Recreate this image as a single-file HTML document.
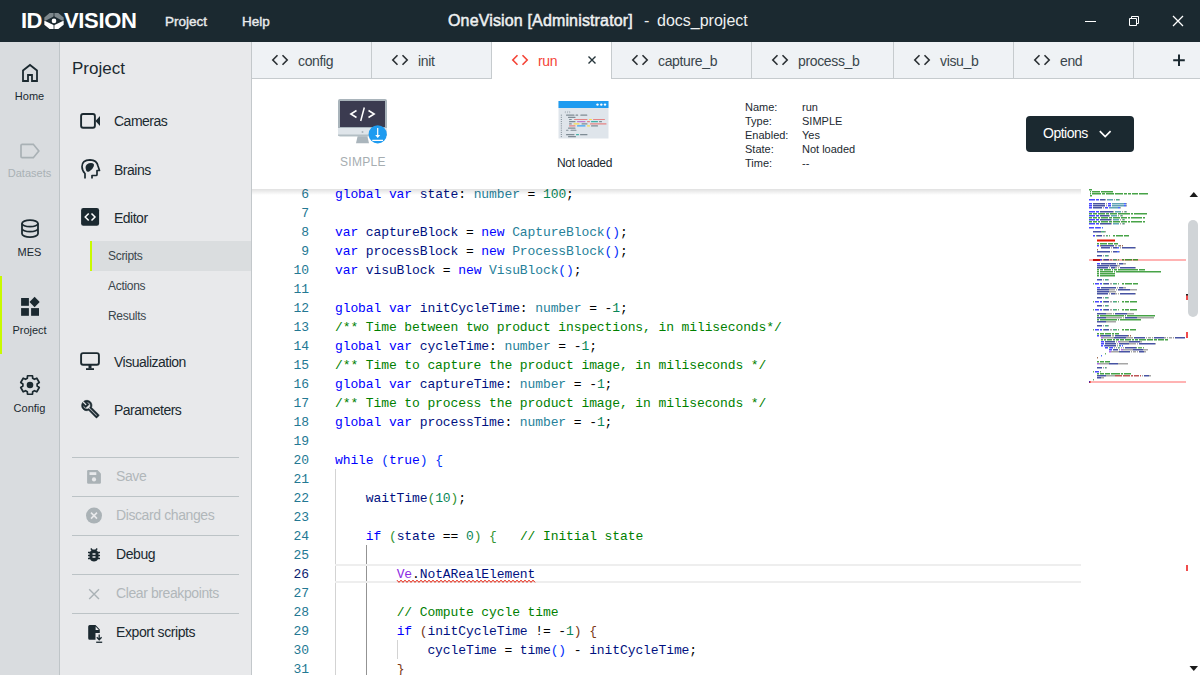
<!DOCTYPE html>
<html><head><meta charset="utf-8">
<style>
*{box-sizing:border-box;margin:0;padding:0}
html,body{width:1200px;height:675px;overflow:hidden;background:#fff;font-family:"Liberation Sans",sans-serif}
.abs{position:absolute}
#title{position:absolute;left:0;top:0;width:1200px;height:42px;background:#1b2930}
.t{position:absolute;white-space:nowrap;line-height:1}
#rail{position:absolute;left:0;top:42px;width:60px;height:633px;background:#d9dcdf;border-right:1px solid #bfc5c8}
#panel{position:absolute;left:60px;top:42px;width:192px;height:633px;background:#e8e9eb;border-right:1px solid #c3c8cb}
.rl{position:absolute;width:59px;text-align:center;font-size:11px;line-height:1;color:#1b2930}
.pi{position:absolute;left:54px;font-size:14px;line-height:1;color:#1b2930;white-space:nowrap;letter-spacing:-0.5px}
.sub{position:absolute;left:48px;font-size:12px;line-height:1;color:#3a464c;letter-spacing:-0.3px}
.sep{position:absolute;left:12px;width:167px;height:1px;background:#bcc3c6}
.btn{position:absolute;left:56px;font-size:14px;line-height:1;color:#1b2930;white-space:nowrap;letter-spacing:-0.4px}
.dis{color:#b1b7ba}
#tabs{position:absolute;left:252px;top:42px;width:948px;height:37px;background:#eff2f5;border-bottom:1px solid #c6cbce}
.tab{position:absolute;top:0;height:37px;border-right:1px solid #c6cbce}
.tab .tx{position:absolute;top:12px;font-size:14px;line-height:1;color:#3a464c;white-space:nowrap}
#hdr{position:absolute;left:252px;top:79px;width:948px;height:111px;background:#fff}
#ed{position:absolute;left:252px;top:188px;width:948px;height:487px;background:#fff;overflow:hidden}
.ln{position:absolute;left:0;width:57px;text-align:right;font-family:"Liberation Mono",monospace;font-size:13px;line-height:19px;color:#237893;padding-top:1px;letter-spacing:-0.1px}
.ln.act{color:#0b216f}
.cl{position:absolute;left:83px;white-space:pre;font-family:"Liberation Mono",monospace;font-size:13px;line-height:19px;color:#000;padding-top:1px;letter-spacing:-0.1px}
</style></head><body>
<!-- TITLE BAR -->
<div id="title">
  <div class="t" style="left:21px;top:10px;font-size:22px;font-weight:bold;color:#fff;letter-spacing:-0.6px">ID</div>
  <svg class="abs" style="left:43.9px;top:13.1px" width="20" height="16" viewBox="0 0 19.1 15.8">
    <polygon points="0,7.7 0,4.4 5.2,0 13.8,0 19.1,4.4 19.1,7.7" fill="#7d878c"/>
    <polygon points="0,7.9 19.1,7.9 19.1,11.6 13.8,15.8 5.2,15.8 0,11.6" fill="#fff"/>
    <polygon points="9.55,3.3 18.3,7.8 9.55,12.2 0.8,7.8" fill="#1b2930"/>
    <rect x="9.15" y="0" width="0.8" height="15.8" fill="#1b2930"/>
    <circle cx="9.55" cy="7.8" r="2.3" fill="#fff"/>
  </svg>
  <div class="t" style="left:64px;top:10px;font-size:22px;font-weight:bold;color:#fff;letter-spacing:-0.35px">VISION</div>
  <div class="t" style="left:165px;top:15px;font-size:13.5px;color:#e9ebec;-webkit-text-stroke:0.4px #e9ebec">Project</div>
  <div class="t" style="left:242px;top:15px;font-size:13.5px;color:#e9ebec;-webkit-text-stroke:0.4px #e9ebec">Help</div>
  <div class="t" style="left:448px;top:13px;font-size:16px;color:#eef0f1;-webkit-text-stroke:0.5px #eef0f1;letter-spacing:0.15px">OneVision [Administrator]</div>
  <div class="t" style="left:644px;top:13px;font-size:16px;color:#eef0f1">-</div>
  <div class="t" style="left:657px;top:13px;font-size:16px;color:#eef0f1">docs_project</div>
  <div class="abs" style="left:1085px;top:21px;width:11px;height:1px;background:#fff"></div>
  <svg class="abs" style="left:1128px;top:15px" width="12" height="12" viewBox="0 0 12 12"><path d="M1.5 3.5h7v7h-7z M3.5 3.5v-2h7v7h-2" fill="none" stroke="#fff" stroke-width="1"/></svg>
  <svg class="abs" style="left:1172px;top:15px" width="12" height="12" viewBox="0 0 12 12"><path d="M1 1L11 11M11 1L1 11" stroke="#fff" stroke-width="1.3"/></svg>
</div>

<!-- LEFT RAIL -->
<div id="rail"></div>
<div style="position:absolute;left:0;top:276px;width:2px;height:78px;background:#c8fa00"></div>
<div class="rl" style="top:91px">Home</div>
<div class="rl" style="top:168px;color:#a9b1b5">Datasets</div>
<div class="rl" style="top:247px">MES</div>
<div class="rl" style="top:325px">Project</div>
<div class="rl" style="top:403px">Config</div>
<svg class="abs" style="left:0;top:0" width="60" height="420">
 <path d="M23 81V70.5L30 65L37 70.5V81H32V75H28V81Z" fill="none" stroke="#1b2930" stroke-width="1.8" stroke-linejoin="miter"/>
 <path d="M22.2 144.3H33.3L38.8 151L33.3 157.7H22.2Q21 157.7 21 156.5V145.5Q21 144.3 22.2 144.3Z" fill="none" stroke="#a9b1b5" stroke-width="1.7"/>
 <ellipse cx="30" cy="223.4" rx="8" ry="3.3" fill="none" stroke="#1b2930" stroke-width="1.8"/>
 <path d="M22 223.4V233.8A8 3.3 0 0 0 38 233.8V223.4M22 228.4A8 3.3 0 0 0 38 228.4" fill="none" stroke="#1b2930" stroke-width="1.8"/>
 <rect x="21.1" y="298" width="7.8" height="7.8" fill="#1b2930"/>
 <rect x="21.1" y="308.1" width="7.8" height="7.7" fill="#1b2930"/>
 <rect x="31.1" y="308.1" width="7.9" height="7.7" fill="#1b2930"/>
 <path d="M34.6 296.8L39.7 302L34.6 307.2L29.5 302Z" fill="#1b2930"/>
 <path d="M27.30 378.32 L27.52 375.73 L32.48 375.73 L32.70 378.32 L34.43 379.33 L36.79 378.21 L39.27 382.52 L37.13 384.00 L37.13 386.00 L39.27 387.48 L36.79 391.79 L34.43 390.67 L32.70 391.68 L32.48 394.27 L27.52 394.27 L27.30 391.68 L25.57 390.67 L23.21 391.79 L20.73 387.48 L22.87 386.00 L22.87 384.00 L20.73 382.52 L23.21 378.21 L25.57 379.33 Z" fill="none" stroke="#1b2930" stroke-width="1.7" stroke-linejoin="round"/>
 <circle cx="30" cy="385" r="3.3" fill="#1b2930"/>
</svg>

<!-- SIDE PANEL -->
<div id="panel"></div>
<div class="t" style="left:72px;top:60px;font-size:17px;color:#1b2930">Project</div>
<div class="pi" style="left:114px;top:114px">Cameras</div>
<div class="pi" style="left:114px;top:163px">Brains</div>
<div class="pi" style="left:114px;top:211px">Editor</div>
<div class="abs" style="left:90px;top:241px;width:161px;height:30px;background:#dadddf"></div>
<div class="abs" style="left:90px;top:241px;width:2px;height:30px;background:#c8fa00"></div>
<div class="sub" style="left:108px;top:250px">Scripts</div>
<div class="sub" style="left:108px;top:280px">Actions</div>
<div class="sub" style="left:108px;top:310px">Results</div>
<div class="pi" style="left:114px;top:355px">Visualization</div>
<div class="pi" style="left:114px;top:403px">Parameters</div>
<div class="sep" style="left:72px;top:457px"></div>
<div class="sep" style="left:72px;top:496px"></div>
<div class="sep" style="left:72px;top:535px"></div>
<div class="sep" style="left:72px;top:574px"></div>
<div class="sep" style="left:72px;top:613px"></div>
<div class="btn dis" style="left:116px;top:469px">Save</div>
<div class="btn dis" style="left:116px;top:508px">Discard changes</div>
<div class="btn" style="left:116px;top:547px">Debug</div>
<div class="btn dis" style="left:116px;top:586px">Clear breakpoints</div>
<div class="btn" style="left:116px;top:625px">Export scripts</div>
<svg class="abs" style="left:0;top:0" width="252" height="675">
 <rect x="81.1" y="114" width="13.8" height="13.8" rx="2" fill="none" stroke="#1b2930" stroke-width="1.9"/>
 <path d="M95.5 121L100 116V126Z" fill="#1b2930"/>
 <path d="M85 178.5V173.5Q82 170.5 82 166.5Q82 160 90 159.8Q97 160 98 166L99.5 170.5H97V174.5Q97 175.5 96 175.5H92V178.5" fill="none" stroke="#1b2930" stroke-width="1.7" stroke-linejoin="round"/>
 <path d="M86.3 170.8Q84.6 166.5 86.8 164.5Q89.3 162.6 92.6 163.2Q94.6 163.8 93.7 166.4Q92.6 169.6 89.2 171.4Q87.1 172.4 86.3 170.8Z" fill="#1b2930"/>
 <rect x="81.1" y="208" width="18" height="17.8" rx="2.2" fill="#1b2930"/>
 <path d="M88.7 213.5L85.2 217L88.7 220.5M91.5 213.5L95 217L91.5 220.5" fill="none" stroke="#fff" stroke-width="1.5"/>
 <rect x="81.1" y="353.1" width="17.8" height="11.6" rx="2" fill="none" stroke="#1b2930" stroke-width="1.9"/>
 <rect x="88.5" y="365" width="3" height="3.5" fill="#1b2930"/>
 <rect x="86" y="368.2" width="8" height="1.8" fill="#1b2930"/>
 <path transform="translate(80.8 399.5) scale(0.8)" d="M22.61 18.99l-9.08-9.08c.93-2.34.45-5.1-1.44-7C9.79.61 6.21.4 3.66 2.26L7.5 6.11 6.08 7.52 2.25 3.69C.39 6.23.6 9.82 2.9 12.11c1.86 1.86 4.57 2.35 6.89 1.48l9.11 9.11c.39.39 1.02.39 1.41 0l2.3-2.3c.4-.38.4-1.01 0-1.41zm-3 1.6l-9.46-9.46c-.61.45-1.29.72-2 .82-1.36.2-2.79-.21-3.83-1.25C3.37 9.76 2.93 8.5 3 7.26l3.09 3.09 4.24-4.24-3.09-3.09c1.24-.07 2.49.37 3.44 1.31 1.08 1.08 1.49 2.57 1.24 3.96-.12.71-.42 1.37-.88 1.96l9.45 9.45-.88.89z" fill="#1b2930" stroke="#1b2930" stroke-width="0.7"/>
 <path d="M87.1 471.2Q87.1 470 88.3 470H97.5L100.9 473.4V482.6Q100.9 483.8 99.7 483.8H88.3Q87.1 483.8 87.1 482.6Z" fill="#aab2b6"/>
 <rect x="89.5" y="472.2" width="6.8" height="2.8" fill="#e8e9eb"/>
 <circle cx="94" cy="479.4" r="2.1" fill="#e8e9eb"/>
 <circle cx="94" cy="515.6" r="8" fill="#aab2b6"/>
 <path d="M91 512.6L97 518.6M97 512.6L91 518.6" stroke="#e8e9eb" stroke-width="1.6"/>
 <path transform="translate(85 545.75) scale(0.75)" d="M20 8h-2.81c-.45-.78-1.07-1.45-1.82-1.96L17 4.41 15.59 3l-2.17 2.17C12.96 5.06 12.49 5 12 5c-.49 0-.96.06-1.41.17L8.41 3 7 4.41l1.62 1.63C7.88 6.55 7.26 7.22 6.81 8H4v2h2.09c-.05.33-.09.66-.09 1v1H4v2h2v1c0 .34.04.67.09 1H4v2h2.81c1.04 1.79 2.97 3 5.19 3s4.15-1.21 5.19-3H20v-2h-2.09c.05-.33.09-.66.09-1v-1h2v-2h-2v-1c0-.34-.04-.67-.09-1H20V8zm-6 8h-4v-2h4v2zm0-4h-4v-2h4v2z" fill="#1b2930"/>
 <path d="M89.2 589.2L99 599M99 589.2L89.2 599" stroke="#aab2b6" stroke-width="1.4"/>
 <path d="M89.7 625.1H95.5L99.8 629.4V633H95.5V639.8H89.7Q88.2 639.8 88.2 638.3V626.6Q88.2 625.1 89.7 625.1Z" fill="#1b2930"/>
 <path d="M95.6 626.6L98.9 629.9H95.6Z" fill="#e8e9eb"/>
 <path d="M99.2 634.5V639.5M96.8 637.2L99.2 639.8L101.6 637.2" fill="none" stroke="#1b2930" stroke-width="1.3"/>
 <rect x="96.2" y="641.6" width="6" height="1.3" fill="#1b2930"/>
</svg>

<!-- TABS -->
<div id="tabs"></div>
<div class="abs" style="left:371px;top:42px;width:1px;height:36px;background:#c6cbce"></div>
<div class="t" style="left:298px;top:54px;font-size:14px;color:#3a464c;letter-spacing:-0.35px">config</div>
<div class="abs" style="left:491px;top:42px;width:1px;height:36px;background:#c6cbce"></div>
<div class="t" style="left:418px;top:54px;font-size:14px;color:#3a464c;letter-spacing:-0.35px">init</div>
<div class="abs" style="left:492px;top:42px;width:119px;height:37px;background:#fff"></div>
<div class="abs" style="left:611px;top:42px;width:1px;height:36px;background:#c6cbce"></div>
<div class="t" style="left:538px;top:54px;font-size:14px;color:#f44336;letter-spacing:-0.35px">run</div>
<div class="abs" style="left:751px;top:42px;width:1px;height:36px;background:#c6cbce"></div>
<div class="t" style="left:658px;top:54px;font-size:14px;color:#3a464c;letter-spacing:-0.35px">capture_b</div>
<div class="abs" style="left:893px;top:42px;width:1px;height:36px;background:#c6cbce"></div>
<div class="t" style="left:798px;top:54px;font-size:14px;color:#3a464c;letter-spacing:-0.35px">process_b</div>
<div class="abs" style="left:1013px;top:42px;width:1px;height:36px;background:#c6cbce"></div>
<div class="t" style="left:940px;top:54px;font-size:14px;color:#3a464c;letter-spacing:-0.35px">visu_b</div>
<div class="abs" style="left:1133px;top:42px;width:1px;height:36px;background:#c6cbce"></div>
<div class="t" style="left:1060px;top:54px;font-size:14px;color:#3a464c;letter-spacing:-0.35px">end</div>
<svg class="abs" style="left:0;top:0" width="1200" height="80">
<path d="M277.5 55.3L272.8 60L277.5 64.7M282.5 55.3L287.2 60L282.5 64.7" fill="none" stroke="#2a2f33" stroke-width="1.6"/>
<path d="M397.5 55.3L392.8 60L397.5 64.7M402.5 55.3L407.2 60L402.5 64.7" fill="none" stroke="#2a2f33" stroke-width="1.6"/>
<path d="M517.5 55.3L512.8 60L517.5 64.7M522.5 55.3L527.2 60L522.5 64.7" fill="none" stroke="#f44336" stroke-width="1.6"/>
<path d="M637.5 55.3L632.8 60L637.5 64.7M642.5 55.3L647.2 60L642.5 64.7" fill="none" stroke="#2a2f33" stroke-width="1.6"/>
<path d="M777.5 55.3L772.8 60L777.5 64.7M782.5 55.3L787.2 60L782.5 64.7" fill="none" stroke="#2a2f33" stroke-width="1.6"/>
<path d="M919.5 55.3L914.8 60L919.5 64.7M924.5 55.3L929.2 60L924.5 64.7" fill="none" stroke="#2a2f33" stroke-width="1.6"/>
<path d="M1039.5 55.3L1034.8 60L1039.5 64.7M1044.5 55.3L1049.2 60L1044.5 64.7" fill="none" stroke="#2a2f33" stroke-width="1.6"/>
<path d="M588.5 56.5L595.5 63.5M595.5 56.5L588.5 63.5" stroke="#26353b" stroke-width="1.4"/>
<path d="M1179 54.5V66M1173.2 60.2H1184.8" stroke="#1b2930" stroke-width="2"/>
</svg>

<!-- HEADER -->
<div id="hdr"></div>
<div class="abs" style="left:252px;top:185px;width:836px;height:8px;background:linear-gradient(#fff0,#0000)"></div>
<svg class="abs" style="left:0;top:0" width="1200" height="190">
 <rect x="338" y="99" width="49" height="37.3" rx="2" fill="#a9b4bb"/>
 <rect x="340" y="101" width="45" height="26" fill="#3b3b50"/>
 <rect x="338" y="128" width="49" height="8.3" rx="1.5" fill="#b3bec4"/>
 <rect x="338" y="128" width="49" height="6.5" fill="#dfe5ea"/>
 <circle cx="362.5" cy="132" r="1" fill="#a9b4bb"/>
 <path d="M357.6 136.3H367.4L369 143.2H356Z" fill="#aab5bc"/>
 <path d="M356.5 110.5L350.8 114L356.5 117.5M368.5 110.5L374.2 114L368.5 117.5M364.3 107.5L360.7 121" fill="none" stroke="#fff" stroke-width="1.5"/>
 <circle cx="377.7" cy="134.3" r="9.1" fill="#1e9bf0"/>
 <path d="M377.7 128V135.5M372.3 140.3H383" fill="none" stroke="#fff" stroke-width="1.2"/>
 <path d="M375.2 135H380.2L377.7 137.9Z" fill="#fff"/>
 <rect x="558.5" y="101" width="50" height="37.5" fill="#dfe5eb"/>
 <rect x="558.5" y="101" width="50" height="7" fill="#1e9bf0"/>
 <circle cx="597.5" cy="104.6" r="1.2" fill="#fff"/><circle cx="601.3" cy="104.6" r="1.2" fill="#fff"/><circle cx="605" cy="104.6" r="1.2" fill="#fff"/>
 <g>
 <path d="M566 111.3l-1.2 0.9 1.2 0.9M569 111.3l1.2 0.9-1.2 0.9M567.9 110.9l-0.6 2.4" fill="none" stroke="#8f9aa2" stroke-width="0.5"/>
  <rect x="560.8" y="114.70" width="1.2" height="0.9" fill="#6f7c86" fill-opacity="0.8"/>
  <rect x="566" y="114.60" width="8.5" height="1.2" rx="0.5" fill="#6f7c86" fill-opacity="0.85"/>
  <rect x="575.5" y="114.60" width="2.7" height="1.2" rx="0.5" fill="#6f7c86" fill-opacity="0.85"/>
  <rect x="580.3" y="114.60" width="7" height="1.2" rx="0.5" fill="#6f7c86" fill-opacity="0.85"/>
  <rect x="560.8" y="116.85" width="1.2" height="0.9" fill="#6f7c86" fill-opacity="0.8"/>
  <rect x="568" y="116.75" width="7.5" height="1.2" rx="0.5" fill="#6f7c86" fill-opacity="0.85"/>
  <rect x="560.8" y="119.00" width="1.2" height="0.9" fill="#6f7c86" fill-opacity="0.8"/>
  <rect x="569" y="118.90" width="2.8" height="1.2" rx="0.5" fill="#6f7c86" fill-opacity="0.85"/>
  <rect x="574" y="118.90" width="13.5" height="1.2" rx="0.5" fill="#e57373" fill-opacity="0.85"/>
  <rect x="589" y="118.90" width="3" height="1.2" rx="0.5" fill="#fdd835" fill-opacity="0.85"/>
  <rect x="593" y="118.90" width="12" height="1.2" rx="0.5" fill="#e57373" fill-opacity="0.85"/>
  <rect x="560.8" y="121.15" width="1.2" height="0.9" fill="#6f7c86" fill-opacity="0.8"/>
  <rect x="569" y="121.05" width="6.5" height="1.2" rx="0.5" fill="#6f7c86" fill-opacity="0.85"/>
  <rect x="577" y="121.05" width="8.5" height="1.2" rx="0.5" fill="#ba68c8" fill-opacity="0.85"/>
  <rect x="587" y="121.05" width="3" height="1.2" rx="0.5" fill="#e57373" fill-opacity="0.85"/>
  <rect x="591" y="121.05" width="7" height="1.2" rx="0.5" fill="#26a69a" fill-opacity="0.85"/>
  <rect x="599" y="121.05" width="3" height="1.2" rx="0.5" fill="#6f7c86" fill-opacity="0.85"/>
  <rect x="560.8" y="123.30" width="1.2" height="0.9" fill="#6f7c86" fill-opacity="0.8"/>
  <rect x="569" y="123.20" width="2.8" height="1.2" rx="0.5" fill="#6f7c86" fill-opacity="0.85"/>
  <rect x="573.5" y="123.20" width="6" height="1.2" rx="0.5" fill="#fdd835" fill-opacity="0.85"/>
  <rect x="581.5" y="123.20" width="6" height="1.2" rx="0.5" fill="#6f7c86" fill-opacity="0.85"/>
  <rect x="590" y="123.20" width="16.5" height="1.2" rx="0.5" fill="#e57373" fill-opacity="0.85"/>
  <rect x="560.8" y="125.45" width="1.2" height="0.9" fill="#6f7c86" fill-opacity="0.8"/>
  <rect x="569" y="125.35" width="6.5" height="1.2" rx="0.5" fill="#e57373" fill-opacity="0.85"/>
  <rect x="577" y="125.35" width="8.5" height="1.2" rx="0.5" fill="#2196f3" fill-opacity="0.85"/>
  <rect x="587" y="125.35" width="3" height="1.2" rx="0.5" fill="#fdd835" fill-opacity="0.85"/>
  <rect x="591" y="125.35" width="7" height="1.2" rx="0.5" fill="#6f7c86" fill-opacity="0.85"/>
  <rect x="560.8" y="127.60" width="1.2" height="0.9" fill="#6f7c86" fill-opacity="0.8"/>
  <rect x="568" y="127.50" width="7.5" height="1.2" rx="0.5" fill="#6f7c86" fill-opacity="0.85"/>
  <rect x="560.8" y="129.75" width="1.2" height="0.9" fill="#6f7c86" fill-opacity="0.8"/>
  <rect x="566" y="129.65" width="2.5" height="1.2" rx="0.5" fill="#6f7c86" fill-opacity="0.85"/>
  <rect x="570.5" y="129.65" width="6" height="1.2" rx="0.5" fill="#6f7c86" fill-opacity="0.85"/>
  <rect x="560.8" y="131.90" width="1.2" height="0.9" fill="#6f7c86" fill-opacity="0.8"/>
  <rect x="560.8" y="134.05" width="1.2" height="0.9" fill="#6f7c86" fill-opacity="0.8"/>
  <rect x="566" y="133.95" width="8.5" height="1.2" rx="0.5" fill="#6f7c86" fill-opacity="0.85"/>
  <rect x="576" y="133.95" width="3" height="1.2" rx="0.5" fill="#26a69a" fill-opacity="0.85"/>
  <rect x="580" y="133.95" width="7.5" height="1.2" rx="0.5" fill="#6f7c86" fill-opacity="0.85"/>
  <rect x="560.8" y="136.20" width="1.2" height="0.9" fill="#6f7c86" fill-opacity="0.8"/>
  <rect x="568" y="136.10" width="8" height="1.2" rx="0.5" fill="#6f7c86" fill-opacity="0.85"/>
 </g>
 <rect x="1026" y="116" width="108" height="36" rx="4" fill="#1b2930"/>
 <path d="M1099.8 131.2L1105.2 136.6L1110.6 131.2" fill="none" stroke="#fff" stroke-width="1.7"/>
</svg>
<div class="t" style="left:340px;top:156px;font-size:12px;color:#a6adb1;letter-spacing:0.3px">SIMPLE</div>
<div class="t" style="left:557px;top:157px;font-size:12px;color:#1b2930;letter-spacing:-0.3px">Not loaded</div>
<div class="abs" style="left:745px;top:100px;font-size:11px;line-height:14px;color:#1b2930">Name:<br>Type:<br>Enabled:<br>State:<br>Time:</div>
<div class="abs" style="left:802px;top:100px;font-size:11px;line-height:14px;color:#1b2930">run<br>SIMPLE<br>Yes<br>Not loaded<br>--</div>
<div class="t" style="left:1043px;top:126px;font-size:14px;color:#fff;letter-spacing:-0.5px">Options</div>

<!-- EDITOR -->
<div id="ed">
<div class="ln" style="top:-4px">6</div>
<div class="cl" style="top:-4px"><span style="color:#0000ff">global</span> <span style="color:#0000ff">var</span> <span style="color:#001080">state</span>: <span style="color:#267f99">number</span> = <span style="color:#098658">100</span>;</div>
<div class="ln" style="top:15px">7</div>
<div class="ln" style="top:34px">8</div>
<div class="cl" style="top:34px"><span style="color:#0000ff">var</span> <span style="color:#001080">captureBlock</span> = <span style="color:#0000ff">new</span> <span style="color:#267f99">CaptureBlock</span><span style="color:#0431fa">()</span>;</div>
<div class="ln" style="top:53px">9</div>
<div class="cl" style="top:53px"><span style="color:#0000ff">var</span> <span style="color:#001080">processBlock</span> = <span style="color:#0000ff">new</span> <span style="color:#267f99">ProcessBlock</span><span style="color:#0431fa">()</span>;</div>
<div class="ln" style="top:72px">10</div>
<div class="cl" style="top:72px"><span style="color:#0000ff">var</span> <span style="color:#001080">visuBlock</span> = <span style="color:#0000ff">new</span> <span style="color:#267f99">VisuBlock</span><span style="color:#0431fa">()</span>;</div>
<div class="ln" style="top:91px">11</div>
<div class="ln" style="top:110px">12</div>
<div class="cl" style="top:110px"><span style="color:#0000ff">global</span> <span style="color:#0000ff">var</span> <span style="color:#001080">initCycleTime</span>: <span style="color:#267f99">number</span> = -<span style="color:#098658">1</span>;</div>
<div class="ln" style="top:129px">13</div>
<div class="cl" style="top:129px"><span style="color:#008000">/** Time between two product inspections, in miliseconds*/</span></div>
<div class="ln" style="top:148px">14</div>
<div class="cl" style="top:148px"><span style="color:#0000ff">global</span> <span style="color:#0000ff">var</span> <span style="color:#001080">cycleTime</span>: <span style="color:#267f99">number</span> = -<span style="color:#098658">1</span>;</div>
<div class="ln" style="top:167px">15</div>
<div class="cl" style="top:167px"><span style="color:#008000">/** Time to capture the product image, in miliseconds */</span></div>
<div class="ln" style="top:186px">16</div>
<div class="cl" style="top:186px"><span style="color:#0000ff">global</span> <span style="color:#0000ff">var</span> <span style="color:#001080">captureTime</span>: <span style="color:#267f99">number</span> = -<span style="color:#098658">1</span>;</div>
<div class="ln" style="top:205px">17</div>
<div class="cl" style="top:205px"><span style="color:#008000">/** Time to process the product image, in miliseconds */</span></div>
<div class="ln" style="top:224px">18</div>
<div class="cl" style="top:224px"><span style="color:#0000ff">global</span> <span style="color:#0000ff">var</span> <span style="color:#001080">processTime</span>: <span style="color:#267f99">number</span> = -<span style="color:#098658">1</span>;</div>
<div class="ln" style="top:243px">19</div>
<div class="ln" style="top:262px">20</div>
<div class="cl" style="top:262px"><span style="color:#0000ff">while</span> <span style="color:#0431fa">(</span><span style="color:#0000ff">true</span><span style="color:#0431fa">)</span> <span style="color:#0431fa">{</span></div>
<div class="ln" style="top:281px">21</div>
<div class="ln" style="top:300px">22</div>
<div class="cl" style="top:300px">    <span style="color:#001080">waitTime</span><span style="color:#319331">(</span><span style="color:#098658">10</span><span style="color:#319331">)</span>;</div>
<div class="ln" style="top:319px">23</div>
<div class="ln" style="top:338px">24</div>
<div class="cl" style="top:338px">    <span style="color:#0000ff">if</span> <span style="color:#319331">(</span><span style="color:#001080">state</span> == <span style="color:#098658">0</span><span style="color:#319331">)</span> <span style="color:#319331">{</span>   <span style="color:#008000">// Initial state</span></div>
<div class="ln" style="top:357px">25</div>
<div class="ln act" style="top:376px">26</div>
<div class="cl" style="top:376px">        <span style="color:#8a2be2">Ve</span>.<span style="color:#001080">NotARealElement</span></div>
<div class="ln" style="top:395px">27</div>
<div class="ln" style="top:414px">28</div>
<div class="cl" style="top:414px">        <span style="color:#008000">// Compute cycle time</span></div>
<div class="ln" style="top:433px">29</div>
<div class="cl" style="top:433px">        <span style="color:#0000ff">if</span> <span style="color:#7b3814">(</span><span style="color:#001080">initCycleTime</span> != -<span style="color:#098658">1</span><span style="color:#7b3814">)</span> <span style="color:#7b3814">{</span></div>
<div class="ln" style="top:452px">30</div>
<div class="cl" style="top:452px">            <span style="color:#001080">cycleTime</span> = <span style="color:#001080">time</span><span style="color:#0431fa">()</span> - <span style="color:#001080">initCycleTime</span>;</div>
<div class="ln" style="top:471px">31</div>
<div class="cl" style="top:471px">        <span style="color:#7b3814">}</span></div>
</div>
<div class="abs" style="left:335px;top:469px;width:1px;height:206px;background:#d3d3d3"></div>
<div class="abs" style="left:366px;top:545px;width:1px;height:130px;background:#939393"></div>
<div class="abs" style="left:397px;top:640px;width:1px;height:19px;background:#d3d3d3"></div>
<div class="abs" style="left:335px;top:564px;width:746px;height:19px;border-top:2px solid #eee;border-bottom:2px solid #eee"></div>
<svg class="abs" style="left:0;top:0" width="1200" height="675">
 <path d="M397 580.2 L399 582.4 L401 580.1999999999999 L403 582.4 L405 580.1999999999999 L407 582.4 L409 580.1999999999999 L411 582.4 L413 580.1999999999999 L415 582.4 L417 580.1999999999999 L419 582.4 L421 580.1999999999999 L423 582.4 L425 580.1999999999999 L427 582.4 L429 580.1999999999999 L431 582.4 L433 580.1999999999999 L435 582.4 L437 580.1999999999999 L439 582.4 L441 580.1999999999999 L443 582.4 L445 580.1999999999999 L447 582.4 L449 580.1999999999999 L451 582.4 L453 580.1999999999999 L455 582.4 L457 580.1999999999999 L459 582.4 L461 580.1999999999999 L463 582.4 L465 580.1999999999999 L467 582.4 L469 580.1999999999999 L471 582.4 L473 580.1999999999999 L475 582.4 L477 580.1999999999999 L479 582.4 L481 580.1999999999999 L483 582.4 L485 580.1999999999999 L487 582.4 L489 580.1999999999999 L491 582.4 L493 580.1999999999999 L495 582.4 L497 580.1999999999999 L499 582.4 L501 580.1999999999999 L503 582.4 L505 580.1999999999999 L507 582.4 L509 580.1999999999999 L511 582.4 L513 580.1999999999999 L515 582.4 L517 580.1999999999999 L519 582.4 L521 580.1999999999999 L523 582.4 L525 580.1999999999999 L527 582.4 L529 580.1999999999999 L531 582.4 L533 580.1999999999999 L535 582.4" fill="none" stroke="#e51400" stroke-width="1"/>
 <rect x="1188" y="220" width="10" height="97" rx="5" fill="#d0d4d7"/>
 <path d="M1189.5 197L1193.8 192L1198 197Z" fill="#1b1b1b"/>
 <path d="M1189.5 666L1193.8 671L1198 666Z" fill="#1b1b1b"/>
 <rect x="1186" y="294" width="2" height="6" fill="#f14c4c"/>
 <rect x="1186" y="294" width="2" height="1.5" fill="#222"/>
 <rect x="1186" y="332" width="2" height="6" fill="#f14c4c"/>
 <rect x="1186" y="565" width="2" height="6" fill="#f14c4c"/>
 <rect x="1089" y="259" width="97" height="2" fill="#ffb3b3"/>
 <rect x="1089" y="381" width="97" height="2" fill="#ffb3b3"/>
 <rect x="1089" y="381" width="1.5" height="2" fill="#e51400"/>
</svg>
<div class="abs" style="left:252px;top:189px;width:829px;height:6px;background:linear-gradient(#0000001f,#0000)"></div>
<svg class="abs" style="left:0;top:0" width="1200" height="675">
<rect x="1089" y="189" width="3" height="1.5" fill="#008000" fill-opacity="0.72"/>
<rect x="1090" y="191" width="1" height="1.5" fill="#008000" fill-opacity="0.72"/>
<rect x="1092" y="191" width="8" height="1.5" fill="#008000" fill-opacity="0.72"/>
<rect x="1101" y="191" width="12" height="1.5" fill="#008000" fill-opacity="0.72"/>
<rect x="1090" y="193" width="1" height="1.5" fill="#008000" fill-opacity="0.72"/>
<rect x="1092" y="193" width="9" height="1.5" fill="#008000" fill-opacity="0.72"/>
<rect x="1102" y="193" width="3" height="1.5" fill="#008000" fill-opacity="0.72"/>
<rect x="1106" y="193" width="8" height="1.5" fill="#008000" fill-opacity="0.72"/>
<rect x="1115" y="193" width="8" height="1.5" fill="#008000" fill-opacity="0.72"/>
<rect x="1124" y="193" width="3" height="1.5" fill="#008000" fill-opacity="0.72"/>
<rect x="1128" y="193" width="3" height="1.5" fill="#008000" fill-opacity="0.72"/>
<rect x="1132" y="193" width="6" height="1.5" fill="#008000" fill-opacity="0.72"/>
<rect x="1139" y="193" width="9" height="1.5" fill="#008000" fill-opacity="0.72"/>
<rect x="1090" y="195" width="2" height="1.5" fill="#008000" fill-opacity="0.72"/>
<rect x="1089" y="199" width="6" height="1.5" fill="#0000ff" fill-opacity="0.72"/>
<rect x="1096" y="199" width="3" height="1.5" fill="#0000ff" fill-opacity="0.72"/>
<rect x="1100" y="199" width="5" height="1.5" fill="#001080" fill-opacity="0.72"/>
<rect x="1105" y="199" width="1" height="1.5" fill="#000000" fill-opacity="0.35"/>
<rect x="1107" y="199" width="6" height="1.5" fill="#267f99" fill-opacity="0.72"/>
<rect x="1114" y="199" width="1" height="1.5" fill="#000000" fill-opacity="0.35"/>
<rect x="1116" y="199" width="3" height="1.5" fill="#098658" fill-opacity="0.72"/>
<rect x="1119" y="199" width="1" height="1.5" fill="#000000" fill-opacity="0.35"/>
<rect x="1089" y="203" width="3" height="1.5" fill="#0000ff" fill-opacity="0.72"/>
<rect x="1093" y="203" width="12" height="1.5" fill="#001080" fill-opacity="0.72"/>
<rect x="1106" y="203" width="1" height="1.5" fill="#000000" fill-opacity="0.35"/>
<rect x="1108" y="203" width="3" height="1.5" fill="#0000ff" fill-opacity="0.72"/>
<rect x="1112" y="203" width="12" height="1.5" fill="#267f99" fill-opacity="0.72"/>
<rect x="1124" y="203" width="2" height="1.5" fill="#0431fa" fill-opacity="0.72"/>
<rect x="1126" y="203" width="1" height="1.5" fill="#000000" fill-opacity="0.35"/>
<rect x="1089" y="205" width="3" height="1.5" fill="#0000ff" fill-opacity="0.72"/>
<rect x="1093" y="205" width="12" height="1.5" fill="#001080" fill-opacity="0.72"/>
<rect x="1106" y="205" width="1" height="1.5" fill="#000000" fill-opacity="0.35"/>
<rect x="1108" y="205" width="3" height="1.5" fill="#0000ff" fill-opacity="0.72"/>
<rect x="1112" y="205" width="12" height="1.5" fill="#267f99" fill-opacity="0.72"/>
<rect x="1124" y="205" width="2" height="1.5" fill="#0431fa" fill-opacity="0.72"/>
<rect x="1126" y="205" width="1" height="1.5" fill="#000000" fill-opacity="0.35"/>
<rect x="1089" y="207" width="3" height="1.5" fill="#0000ff" fill-opacity="0.72"/>
<rect x="1093" y="207" width="9" height="1.5" fill="#001080" fill-opacity="0.72"/>
<rect x="1103" y="207" width="1" height="1.5" fill="#000000" fill-opacity="0.35"/>
<rect x="1105" y="207" width="3" height="1.5" fill="#0000ff" fill-opacity="0.72"/>
<rect x="1109" y="207" width="9" height="1.5" fill="#267f99" fill-opacity="0.72"/>
<rect x="1118" y="207" width="2" height="1.5" fill="#0431fa" fill-opacity="0.72"/>
<rect x="1120" y="207" width="1" height="1.5" fill="#000000" fill-opacity="0.35"/>
<rect x="1089" y="211" width="6" height="1.5" fill="#0000ff" fill-opacity="0.72"/>
<rect x="1096" y="211" width="3" height="1.5" fill="#0000ff" fill-opacity="0.72"/>
<rect x="1100" y="211" width="13" height="1.5" fill="#001080" fill-opacity="0.72"/>
<rect x="1113" y="211" width="1" height="1.5" fill="#000000" fill-opacity="0.35"/>
<rect x="1115" y="211" width="6" height="1.5" fill="#267f99" fill-opacity="0.72"/>
<rect x="1122" y="211" width="1" height="1.5" fill="#000000" fill-opacity="0.35"/>
<rect x="1124" y="211" width="1" height="1.5" fill="#000000" fill-opacity="0.35"/>
<rect x="1125" y="211" width="1" height="1.5" fill="#098658" fill-opacity="0.72"/>
<rect x="1126" y="211" width="1" height="1.5" fill="#000000" fill-opacity="0.35"/>
<rect x="1089" y="213" width="3" height="1.5" fill="#008000" fill-opacity="0.72"/>
<rect x="1093" y="213" width="4" height="1.5" fill="#008000" fill-opacity="0.72"/>
<rect x="1098" y="213" width="7" height="1.5" fill="#008000" fill-opacity="0.72"/>
<rect x="1106" y="213" width="3" height="1.5" fill="#008000" fill-opacity="0.72"/>
<rect x="1110" y="213" width="7" height="1.5" fill="#008000" fill-opacity="0.72"/>
<rect x="1118" y="213" width="12" height="1.5" fill="#008000" fill-opacity="0.72"/>
<rect x="1131" y="213" width="2" height="1.5" fill="#008000" fill-opacity="0.72"/>
<rect x="1134" y="213" width="13" height="1.5" fill="#008000" fill-opacity="0.72"/>
<rect x="1089" y="215" width="6" height="1.5" fill="#0000ff" fill-opacity="0.72"/>
<rect x="1096" y="215" width="3" height="1.5" fill="#0000ff" fill-opacity="0.72"/>
<rect x="1100" y="215" width="9" height="1.5" fill="#001080" fill-opacity="0.72"/>
<rect x="1109" y="215" width="1" height="1.5" fill="#000000" fill-opacity="0.35"/>
<rect x="1111" y="215" width="6" height="1.5" fill="#267f99" fill-opacity="0.72"/>
<rect x="1118" y="215" width="1" height="1.5" fill="#000000" fill-opacity="0.35"/>
<rect x="1120" y="215" width="1" height="1.5" fill="#000000" fill-opacity="0.35"/>
<rect x="1121" y="215" width="1" height="1.5" fill="#098658" fill-opacity="0.72"/>
<rect x="1122" y="215" width="1" height="1.5" fill="#000000" fill-opacity="0.35"/>
<rect x="1089" y="217" width="3" height="1.5" fill="#008000" fill-opacity="0.72"/>
<rect x="1093" y="217" width="4" height="1.5" fill="#008000" fill-opacity="0.72"/>
<rect x="1098" y="217" width="2" height="1.5" fill="#008000" fill-opacity="0.72"/>
<rect x="1101" y="217" width="7" height="1.5" fill="#008000" fill-opacity="0.72"/>
<rect x="1109" y="217" width="3" height="1.5" fill="#008000" fill-opacity="0.72"/>
<rect x="1113" y="217" width="7" height="1.5" fill="#008000" fill-opacity="0.72"/>
<rect x="1121" y="217" width="6" height="1.5" fill="#008000" fill-opacity="0.72"/>
<rect x="1128" y="217" width="2" height="1.5" fill="#008000" fill-opacity="0.72"/>
<rect x="1131" y="217" width="11" height="1.5" fill="#008000" fill-opacity="0.72"/>
<rect x="1143" y="217" width="2" height="1.5" fill="#008000" fill-opacity="0.72"/>
<rect x="1089" y="219" width="6" height="1.5" fill="#0000ff" fill-opacity="0.72"/>
<rect x="1096" y="219" width="3" height="1.5" fill="#0000ff" fill-opacity="0.72"/>
<rect x="1100" y="219" width="11" height="1.5" fill="#001080" fill-opacity="0.72"/>
<rect x="1111" y="219" width="1" height="1.5" fill="#000000" fill-opacity="0.35"/>
<rect x="1113" y="219" width="6" height="1.5" fill="#267f99" fill-opacity="0.72"/>
<rect x="1120" y="219" width="1" height="1.5" fill="#000000" fill-opacity="0.35"/>
<rect x="1122" y="219" width="1" height="1.5" fill="#000000" fill-opacity="0.35"/>
<rect x="1123" y="219" width="1" height="1.5" fill="#098658" fill-opacity="0.72"/>
<rect x="1124" y="219" width="1" height="1.5" fill="#000000" fill-opacity="0.35"/>
<rect x="1089" y="221" width="3" height="1.5" fill="#008000" fill-opacity="0.72"/>
<rect x="1093" y="221" width="4" height="1.5" fill="#008000" fill-opacity="0.72"/>
<rect x="1098" y="221" width="2" height="1.5" fill="#008000" fill-opacity="0.72"/>
<rect x="1101" y="221" width="7" height="1.5" fill="#008000" fill-opacity="0.72"/>
<rect x="1109" y="221" width="3" height="1.5" fill="#008000" fill-opacity="0.72"/>
<rect x="1113" y="221" width="7" height="1.5" fill="#008000" fill-opacity="0.72"/>
<rect x="1121" y="221" width="6" height="1.5" fill="#008000" fill-opacity="0.72"/>
<rect x="1128" y="221" width="2" height="1.5" fill="#008000" fill-opacity="0.72"/>
<rect x="1131" y="221" width="11" height="1.5" fill="#008000" fill-opacity="0.72"/>
<rect x="1143" y="221" width="2" height="1.5" fill="#008000" fill-opacity="0.72"/>
<rect x="1089" y="223" width="6" height="1.5" fill="#0000ff" fill-opacity="0.72"/>
<rect x="1096" y="223" width="3" height="1.5" fill="#0000ff" fill-opacity="0.72"/>
<rect x="1100" y="223" width="11" height="1.5" fill="#001080" fill-opacity="0.72"/>
<rect x="1111" y="223" width="1" height="1.5" fill="#000000" fill-opacity="0.35"/>
<rect x="1113" y="223" width="6" height="1.5" fill="#267f99" fill-opacity="0.72"/>
<rect x="1120" y="223" width="1" height="1.5" fill="#000000" fill-opacity="0.35"/>
<rect x="1122" y="223" width="1" height="1.5" fill="#000000" fill-opacity="0.35"/>
<rect x="1123" y="223" width="1" height="1.5" fill="#098658" fill-opacity="0.72"/>
<rect x="1124" y="223" width="1" height="1.5" fill="#000000" fill-opacity="0.35"/>
<rect x="1089" y="227" width="5" height="1.5" fill="#0000ff" fill-opacity="0.72"/>
<rect x="1095" y="227" width="1" height="1.5" fill="#0431fa" fill-opacity="0.72"/>
<rect x="1096" y="227" width="4" height="1.5" fill="#0000ff" fill-opacity="0.72"/>
<rect x="1100" y="227" width="1" height="1.5" fill="#0431fa" fill-opacity="0.72"/>
<rect x="1102" y="227" width="1" height="1.5" fill="#0431fa" fill-opacity="0.72"/>
<rect x="1093" y="231" width="8" height="1.5" fill="#001080" fill-opacity="0.72"/>
<rect x="1101" y="231" width="1" height="1.5" fill="#319331" fill-opacity="0.72"/>
<rect x="1102" y="231" width="2" height="1.5" fill="#098658" fill-opacity="0.72"/>
<rect x="1104" y="231" width="1" height="1.5" fill="#319331" fill-opacity="0.72"/>
<rect x="1105" y="231" width="1" height="1.5" fill="#000000" fill-opacity="0.35"/>
<rect x="1093" y="235" width="2" height="1.5" fill="#0000ff" fill-opacity="0.72"/>
<rect x="1096" y="235" width="1" height="1.5" fill="#319331" fill-opacity="0.72"/>
<rect x="1097" y="235" width="5" height="1.5" fill="#001080" fill-opacity="0.72"/>
<rect x="1103" y="235" width="2" height="1.5" fill="#000000" fill-opacity="0.35"/>
<rect x="1106" y="235" width="1" height="1.5" fill="#098658" fill-opacity="0.72"/>
<rect x="1107" y="235" width="1" height="1.5" fill="#319331" fill-opacity="0.72"/>
<rect x="1109" y="235" width="1" height="1.5" fill="#319331" fill-opacity="0.72"/>
<rect x="1113" y="235" width="2" height="1.5" fill="#008000" fill-opacity="0.72"/>
<rect x="1116" y="235" width="7" height="1.5" fill="#008000" fill-opacity="0.72"/>
<rect x="1124" y="235" width="5" height="1.5" fill="#008000" fill-opacity="0.72"/>
<rect x="1097" y="243" width="2" height="1.5" fill="#008000" fill-opacity="0.72"/>
<rect x="1100" y="243" width="7" height="1.5" fill="#008000" fill-opacity="0.72"/>
<rect x="1108" y="243" width="5" height="1.5" fill="#008000" fill-opacity="0.72"/>
<rect x="1114" y="243" width="4" height="1.5" fill="#008000" fill-opacity="0.72"/>
<rect x="1097" y="245" width="2" height="1.5" fill="#0000ff" fill-opacity="0.72"/>
<rect x="1100" y="245" width="1" height="1.5" fill="#7b3814" fill-opacity="0.72"/>
<rect x="1101" y="245" width="13" height="1.5" fill="#001080" fill-opacity="0.72"/>
<rect x="1115" y="245" width="2" height="1.5" fill="#000000" fill-opacity="0.35"/>
<rect x="1118" y="245" width="1" height="1.5" fill="#000000" fill-opacity="0.35"/>
<rect x="1119" y="245" width="1" height="1.5" fill="#098658" fill-opacity="0.72"/>
<rect x="1120" y="245" width="1" height="1.5" fill="#7b3814" fill-opacity="0.72"/>
<rect x="1122" y="245" width="1" height="1.5" fill="#7b3814" fill-opacity="0.72"/>
<rect x="1101" y="247" width="9" height="1.5" fill="#001080" fill-opacity="0.72"/>
<rect x="1111" y="247" width="1" height="1.5" fill="#000000" fill-opacity="0.35"/>
<rect x="1113" y="247" width="4" height="1.5" fill="#001080" fill-opacity="0.72"/>
<rect x="1117" y="247" width="2" height="1.5" fill="#0431fa" fill-opacity="0.72"/>
<rect x="1120" y="247" width="1" height="1.5" fill="#000000" fill-opacity="0.35"/>
<rect x="1122" y="247" width="13" height="1.5" fill="#001080" fill-opacity="0.72"/>
<rect x="1135" y="247" width="1" height="1.5" fill="#000000" fill-opacity="0.35"/>
<rect x="1097" y="249" width="1" height="1.5" fill="#7b3814" fill-opacity="0.72"/>
<rect x="1097" y="251" width="13" height="1.5" fill="#001080" fill-opacity="0.72"/>
<rect x="1111" y="251" width="1" height="1.5" fill="#000000" fill-opacity="0.35"/>
<rect x="1113" y="251" width="4" height="1.5" fill="#001080" fill-opacity="0.72"/>
<rect x="1117" y="251" width="2" height="1.5" fill="#0431fa" fill-opacity="0.72"/>
<rect x="1119" y="251" width="1" height="1.5" fill="#000000" fill-opacity="0.35"/>
<rect x="1097" y="255" width="5" height="1.5" fill="#001080" fill-opacity="0.72"/>
<rect x="1103" y="255" width="1" height="1.5" fill="#000000" fill-opacity="0.35"/>
<rect x="1105" y="255" width="3" height="1.5" fill="#098658" fill-opacity="0.72"/>
<rect x="1108" y="255" width="1" height="1.5" fill="#000000" fill-opacity="0.35"/>
<rect x="1093" y="259" width="1" height="1.5" fill="#319331" fill-opacity="0.72"/>
<rect x="1095" y="259" width="4" height="1.5" fill="#0000ff" fill-opacity="0.72"/>
<rect x="1100" y="259" width="2" height="1.5" fill="#0000ff" fill-opacity="0.72"/>
<rect x="1103" y="259" width="1" height="1.5" fill="#319331" fill-opacity="0.72"/>
<rect x="1104" y="259" width="5" height="1.5" fill="#001080" fill-opacity="0.72"/>
<rect x="1110" y="259" width="2" height="1.5" fill="#000000" fill-opacity="0.35"/>
<rect x="1113" y="259" width="3" height="1.5" fill="#098658" fill-opacity="0.72"/>
<rect x="1116" y="259" width="1" height="1.5" fill="#319331" fill-opacity="0.72"/>
<rect x="1118" y="259" width="1" height="1.5" fill="#319331" fill-opacity="0.72"/>
<rect x="1122" y="259" width="2" height="1.5" fill="#008000" fill-opacity="0.72"/>
<rect x="1125" y="259" width="7" height="1.5" fill="#008000" fill-opacity="0.72"/>
<rect x="1133" y="259" width="5" height="1.5" fill="#008000" fill-opacity="0.72"/>
<rect x="1097" y="263" width="3" height="1.5" fill="#0000ff" fill-opacity="0.72"/>
<rect x="1101" y="263" width="15" height="1.5" fill="#001080" fill-opacity="0.72"/>
<rect x="1117" y="263" width="1" height="1.5" fill="#000000" fill-opacity="0.35"/>
<rect x="1119" y="263" width="4" height="1.5" fill="#001080" fill-opacity="0.72"/>
<rect x="1123" y="263" width="3" height="1.5" fill="#000000" fill-opacity="0.35"/>
<rect x="1097" y="265" width="12" height="1.5" fill="#001080" fill-opacity="0.72"/>
<rect x="1109" y="265" width="1" height="1.5" fill="#000000" fill-opacity="0.35"/>
<rect x="1110" y="265" width="7" height="1.5" fill="#001080" fill-opacity="0.72"/>
<rect x="1117" y="265" width="3" height="1.5" fill="#000000" fill-opacity="0.35"/>
<rect x="1097" y="267" width="11" height="1.5" fill="#001080" fill-opacity="0.72"/>
<rect x="1109" y="267" width="1" height="1.5" fill="#000000" fill-opacity="0.35"/>
<rect x="1111" y="267" width="4" height="1.5" fill="#001080" fill-opacity="0.72"/>
<rect x="1115" y="267" width="2" height="1.5" fill="#000000" fill-opacity="0.35"/>
<rect x="1118" y="267" width="1" height="1.5" fill="#000000" fill-opacity="0.35"/>
<rect x="1120" y="267" width="15" height="1.5" fill="#001080" fill-opacity="0.72"/>
<rect x="1135" y="267" width="1" height="1.5" fill="#000000" fill-opacity="0.35"/>
<rect x="1097" y="269" width="2" height="1.5" fill="#008000" fill-opacity="0.72"/>
<rect x="1100" y="269" width="3" height="1.5" fill="#008000" fill-opacity="0.72"/>
<rect x="1104" y="269" width="7" height="1.5" fill="#008000" fill-opacity="0.72"/>
<rect x="1112" y="269" width="1" height="1.5" fill="#008000" fill-opacity="0.72"/>
<rect x="1114" y="269" width="3" height="1.5" fill="#008000" fill-opacity="0.72"/>
<rect x="1118" y="269" width="20" height="1.5" fill="#008000" fill-opacity="0.72"/>
<rect x="1139" y="269" width="6" height="1.5" fill="#008000" fill-opacity="0.72"/>
<rect x="1097" y="271" width="2" height="1.5" fill="#008000" fill-opacity="0.72"/>
<rect x="1100" y="271" width="13" height="1.5" fill="#008000" fill-opacity="0.72"/>
<rect x="1114" y="271" width="1" height="1.5" fill="#008000" fill-opacity="0.72"/>
<rect x="1116" y="271" width="45" height="1.5" fill="#008000" fill-opacity="0.72"/>
<rect x="1097" y="273" width="2" height="1.5" fill="#008000" fill-opacity="0.72"/>
<rect x="1100" y="273" width="15" height="1.5" fill="#008000" fill-opacity="0.72"/>
<rect x="1097" y="275" width="2" height="1.5" fill="#008000" fill-opacity="0.72"/>
<rect x="1100" y="275" width="15" height="1.5" fill="#008000" fill-opacity="0.72"/>
<rect x="1097" y="279" width="5" height="1.5" fill="#001080" fill-opacity="0.72"/>
<rect x="1103" y="279" width="1" height="1.5" fill="#000000" fill-opacity="0.35"/>
<rect x="1105" y="279" width="3" height="1.5" fill="#098658" fill-opacity="0.72"/>
<rect x="1108" y="279" width="1" height="1.5" fill="#000000" fill-opacity="0.35"/>
<rect x="1093" y="283" width="1" height="1.5" fill="#319331" fill-opacity="0.72"/>
<rect x="1095" y="283" width="4" height="1.5" fill="#0000ff" fill-opacity="0.72"/>
<rect x="1100" y="283" width="2" height="1.5" fill="#0000ff" fill-opacity="0.72"/>
<rect x="1103" y="283" width="1" height="1.5" fill="#319331" fill-opacity="0.72"/>
<rect x="1104" y="283" width="5" height="1.5" fill="#001080" fill-opacity="0.72"/>
<rect x="1110" y="283" width="2" height="1.5" fill="#000000" fill-opacity="0.35"/>
<rect x="1113" y="283" width="3" height="1.5" fill="#098658" fill-opacity="0.72"/>
<rect x="1116" y="283" width="1" height="1.5" fill="#319331" fill-opacity="0.72"/>
<rect x="1118" y="283" width="1" height="1.5" fill="#319331" fill-opacity="0.72"/>
<rect x="1122" y="283" width="2" height="1.5" fill="#008000" fill-opacity="0.72"/>
<rect x="1125" y="283" width="7" height="1.5" fill="#008000" fill-opacity="0.72"/>
<rect x="1133" y="283" width="5" height="1.5" fill="#008000" fill-opacity="0.72"/>
<rect x="1097" y="287" width="3" height="1.5" fill="#0000ff" fill-opacity="0.72"/>
<rect x="1101" y="287" width="15" height="1.5" fill="#001080" fill-opacity="0.72"/>
<rect x="1117" y="287" width="1" height="1.5" fill="#000000" fill-opacity="0.35"/>
<rect x="1119" y="287" width="4" height="1.5" fill="#001080" fill-opacity="0.72"/>
<rect x="1123" y="287" width="3" height="1.5" fill="#000000" fill-opacity="0.35"/>
<rect x="1097" y="289" width="12" height="1.5" fill="#001080" fill-opacity="0.72"/>
<rect x="1109" y="289" width="6" height="1.5" fill="#000000" fill-opacity="0.35"/>
<rect x="1116" y="289" width="1" height="1.5" fill="#000000" fill-opacity="0.35"/>
<rect x="1118" y="289" width="12" height="1.5" fill="#001080" fill-opacity="0.72"/>
<rect x="1130" y="289" width="7" height="1.5" fill="#000000" fill-opacity="0.35"/>
<rect x="1097" y="291" width="12" height="1.5" fill="#001080" fill-opacity="0.72"/>
<rect x="1109" y="291" width="7" height="1.5" fill="#000000" fill-opacity="0.35"/>
<rect x="1097" y="293" width="11" height="1.5" fill="#001080" fill-opacity="0.72"/>
<rect x="1109" y="293" width="1" height="1.5" fill="#000000" fill-opacity="0.35"/>
<rect x="1111" y="293" width="4" height="1.5" fill="#001080" fill-opacity="0.72"/>
<rect x="1115" y="293" width="2" height="1.5" fill="#000000" fill-opacity="0.35"/>
<rect x="1118" y="293" width="1" height="1.5" fill="#000000" fill-opacity="0.35"/>
<rect x="1120" y="293" width="15" height="1.5" fill="#001080" fill-opacity="0.72"/>
<rect x="1135" y="293" width="1" height="1.5" fill="#000000" fill-opacity="0.35"/>
<rect x="1097" y="297" width="5" height="1.5" fill="#001080" fill-opacity="0.72"/>
<rect x="1103" y="297" width="1" height="1.5" fill="#000000" fill-opacity="0.35"/>
<rect x="1105" y="297" width="3" height="1.5" fill="#098658" fill-opacity="0.72"/>
<rect x="1108" y="297" width="1" height="1.5" fill="#000000" fill-opacity="0.35"/>
<rect x="1093" y="301" width="1" height="1.5" fill="#319331" fill-opacity="0.72"/>
<rect x="1095" y="301" width="4" height="1.5" fill="#0000ff" fill-opacity="0.72"/>
<rect x="1100" y="301" width="2" height="1.5" fill="#0000ff" fill-opacity="0.72"/>
<rect x="1103" y="301" width="1" height="1.5" fill="#319331" fill-opacity="0.72"/>
<rect x="1104" y="301" width="5" height="1.5" fill="#001080" fill-opacity="0.72"/>
<rect x="1110" y="301" width="2" height="1.5" fill="#000000" fill-opacity="0.35"/>
<rect x="1113" y="301" width="3" height="1.5" fill="#098658" fill-opacity="0.72"/>
<rect x="1116" y="301" width="1" height="1.5" fill="#319331" fill-opacity="0.72"/>
<rect x="1118" y="301" width="1" height="1.5" fill="#319331" fill-opacity="0.72"/>
<rect x="1122" y="301" width="2" height="1.5" fill="#008000" fill-opacity="0.72"/>
<rect x="1125" y="301" width="4" height="1.5" fill="#008000" fill-opacity="0.72"/>
<rect x="1130" y="301" width="7" height="1.5" fill="#008000" fill-opacity="0.72"/>
<rect x="1097" y="305" width="5" height="1.5" fill="#001080" fill-opacity="0.72"/>
<rect x="1103" y="305" width="1" height="1.5" fill="#000000" fill-opacity="0.35"/>
<rect x="1105" y="305" width="3" height="1.5" fill="#098658" fill-opacity="0.72"/>
<rect x="1108" y="305" width="1" height="1.5" fill="#000000" fill-opacity="0.35"/>
<rect x="1093" y="309" width="1" height="1.5" fill="#319331" fill-opacity="0.72"/>
<rect x="1095" y="309" width="4" height="1.5" fill="#0000ff" fill-opacity="0.72"/>
<rect x="1100" y="309" width="2" height="1.5" fill="#0000ff" fill-opacity="0.72"/>
<rect x="1103" y="309" width="1" height="1.5" fill="#319331" fill-opacity="0.72"/>
<rect x="1104" y="309" width="5" height="1.5" fill="#001080" fill-opacity="0.72"/>
<rect x="1110" y="309" width="2" height="1.5" fill="#000000" fill-opacity="0.35"/>
<rect x="1113" y="309" width="3" height="1.5" fill="#098658" fill-opacity="0.72"/>
<rect x="1116" y="309" width="1" height="1.5" fill="#319331" fill-opacity="0.72"/>
<rect x="1118" y="309" width="1" height="1.5" fill="#319331" fill-opacity="0.72"/>
<rect x="1122" y="309" width="2" height="1.5" fill="#008000" fill-opacity="0.72"/>
<rect x="1125" y="309" width="4" height="1.5" fill="#008000" fill-opacity="0.72"/>
<rect x="1130" y="309" width="7" height="1.5" fill="#008000" fill-opacity="0.72"/>
<rect x="1097" y="313" width="9" height="1.5" fill="#001080" fill-opacity="0.72"/>
<rect x="1106" y="313" width="6" height="1.5" fill="#000000" fill-opacity="0.35"/>
<rect x="1113" y="313" width="1" height="1.5" fill="#000000" fill-opacity="0.35"/>
<rect x="1115" y="313" width="12" height="1.5" fill="#001080" fill-opacity="0.72"/>
<rect x="1127" y="313" width="7" height="1.5" fill="#000000" fill-opacity="0.35"/>
<rect x="1097" y="315" width="2" height="1.5" fill="#008000" fill-opacity="0.72"/>
<rect x="1100" y="315" width="24" height="1.5" fill="#008000" fill-opacity="0.72"/>
<rect x="1125" y="315" width="1" height="1.5" fill="#008000" fill-opacity="0.72"/>
<rect x="1127" y="315" width="28" height="1.5" fill="#008000" fill-opacity="0.72"/>
<rect x="1097" y="317" width="9" height="1.5" fill="#001080" fill-opacity="0.72"/>
<rect x="1106" y="317" width="16" height="1.5" fill="#000000" fill-opacity="0.35"/>
<rect x="1123" y="317" width="1" height="1.5" fill="#000000" fill-opacity="0.35"/>
<rect x="1125" y="317" width="12" height="1.5" fill="#001080" fill-opacity="0.72"/>
<rect x="1137" y="317" width="17" height="1.5" fill="#000000" fill-opacity="0.35"/>
<rect x="1097" y="319" width="2" height="1.5" fill="#008000" fill-opacity="0.72"/>
<rect x="1100" y="319" width="17" height="1.5" fill="#008000" fill-opacity="0.72"/>
<rect x="1118" y="319" width="1" height="1.5" fill="#008000" fill-opacity="0.72"/>
<rect x="1120" y="319" width="21" height="1.5" fill="#008000" fill-opacity="0.72"/>
<rect x="1097" y="321" width="9" height="1.5" fill="#001080" fill-opacity="0.72"/>
<rect x="1106" y="321" width="10" height="1.5" fill="#000000" fill-opacity="0.35"/>
<rect x="1097" y="325" width="5" height="1.5" fill="#001080" fill-opacity="0.72"/>
<rect x="1103" y="325" width="1" height="1.5" fill="#000000" fill-opacity="0.35"/>
<rect x="1105" y="325" width="3" height="1.5" fill="#098658" fill-opacity="0.72"/>
<rect x="1108" y="325" width="1" height="1.5" fill="#000000" fill-opacity="0.35"/>
<rect x="1093" y="329" width="1" height="1.5" fill="#319331" fill-opacity="0.72"/>
<rect x="1095" y="329" width="4" height="1.5" fill="#0000ff" fill-opacity="0.72"/>
<rect x="1100" y="329" width="2" height="1.5" fill="#0000ff" fill-opacity="0.72"/>
<rect x="1103" y="329" width="1" height="1.5" fill="#319331" fill-opacity="0.72"/>
<rect x="1104" y="329" width="5" height="1.5" fill="#001080" fill-opacity="0.72"/>
<rect x="1110" y="329" width="2" height="1.5" fill="#000000" fill-opacity="0.35"/>
<rect x="1113" y="329" width="3" height="1.5" fill="#098658" fill-opacity="0.72"/>
<rect x="1116" y="329" width="1" height="1.5" fill="#319331" fill-opacity="0.72"/>
<rect x="1118" y="329" width="1" height="1.5" fill="#319331" fill-opacity="0.72"/>
<rect x="1122" y="329" width="2" height="1.5" fill="#008000" fill-opacity="0.72"/>
<rect x="1125" y="329" width="4" height="1.5" fill="#008000" fill-opacity="0.72"/>
<rect x="1130" y="329" width="6" height="1.5" fill="#008000" fill-opacity="0.72"/>
<rect x="1097" y="333" width="2" height="1.5" fill="#008000" fill-opacity="0.72"/>
<rect x="1100" y="333" width="4" height="1.5" fill="#008000" fill-opacity="0.72"/>
<rect x="1105" y="333" width="6" height="1.5" fill="#008000" fill-opacity="0.72"/>
<rect x="1112" y="333" width="2" height="1.5" fill="#008000" fill-opacity="0.72"/>
<rect x="1115" y="333" width="4" height="1.5" fill="#008000" fill-opacity="0.72"/>
<rect x="1097" y="335" width="2" height="1.5" fill="#0000ff" fill-opacity="0.72"/>
<rect x="1100" y="335" width="1" height="1.5" fill="#7b3814" fill-opacity="0.72"/>
<rect x="1101" y="335" width="10" height="1.5" fill="#001080" fill-opacity="0.72"/>
<rect x="1112" y="335" width="2" height="1.5" fill="#000000" fill-opacity="0.35"/>
<rect x="1115" y="335" width="7" height="1.5" fill="#001080" fill-opacity="0.72"/>
<rect x="1122" y="335" width="6" height="1.5" fill="#001080" fill-opacity="0.72"/>
<rect x="1128" y="335" width="1" height="1.5" fill="#7b3814" fill-opacity="0.72"/>
<rect x="1130" y="335" width="1" height="1.5" fill="#7b3814" fill-opacity="0.72"/>
<rect x="1101" y="337" width="2" height="1.5" fill="#8a2be2" fill-opacity="0.72"/>
<rect x="1103" y="337" width="11" height="1.5" fill="#000000" fill-opacity="0.35"/>
<rect x="1114" y="337" width="12" height="1.5" fill="#001080" fill-opacity="0.72"/>
<rect x="1126" y="337" width="7" height="1.5" fill="#000000" fill-opacity="0.35"/>
<rect x="1134" y="337" width="11" height="1.5" fill="#001080" fill-opacity="0.72"/>
<rect x="1146" y="337" width="1" height="1.5" fill="#000000" fill-opacity="0.35"/>
<rect x="1148" y="337" width="3" height="1.5" fill="#000000" fill-opacity="0.35"/>
<rect x="1152" y="337" width="1" height="1.5" fill="#000000" fill-opacity="0.35"/>
<rect x="1154" y="337" width="10" height="1.5" fill="#001080" fill-opacity="0.72"/>
<rect x="1164" y="337" width="2" height="1.5" fill="#000000" fill-opacity="0.35"/>
<rect x="1167" y="337" width="1" height="1.5" fill="#000000" fill-opacity="0.35"/>
<rect x="1169" y="337" width="3" height="1.5" fill="#000000" fill-opacity="0.35"/>
<rect x="1173" y="337" width="1" height="1.5" fill="#000000" fill-opacity="0.35"/>
<rect x="1175" y="337" width="10" height="1.5" fill="#001080" fill-opacity="0.72"/>
<rect x="1101" y="339" width="2" height="1.5" fill="#008000" fill-opacity="0.72"/>
<rect x="1104" y="339" width="2" height="1.5" fill="#008000" fill-opacity="0.72"/>
<rect x="1107" y="339" width="5" height="1.5" fill="#008000" fill-opacity="0.72"/>
<rect x="1113" y="339" width="2" height="1.5" fill="#008000" fill-opacity="0.72"/>
<rect x="1116" y="339" width="3" height="1.5" fill="#008000" fill-opacity="0.72"/>
<rect x="1120" y="339" width="4" height="1.5" fill="#008000" fill-opacity="0.72"/>
<rect x="1125" y="339" width="6" height="1.5" fill="#008000" fill-opacity="0.72"/>
<rect x="1132" y="339" width="2" height="1.5" fill="#008000" fill-opacity="0.72"/>
<rect x="1135" y="339" width="3" height="1.5" fill="#008000" fill-opacity="0.72"/>
<rect x="1139" y="339" width="7" height="1.5" fill="#008000" fill-opacity="0.72"/>
<rect x="1147" y="339" width="6" height="1.5" fill="#008000" fill-opacity="0.72"/>
<rect x="1154" y="339" width="3" height="1.5" fill="#008000" fill-opacity="0.72"/>
<rect x="1158" y="339" width="6" height="1.5" fill="#008000" fill-opacity="0.72"/>
<rect x="1165" y="339" width="3" height="1.5" fill="#008000" fill-opacity="0.72"/>
<rect x="1101" y="341" width="3" height="1.5" fill="#0000ff" fill-opacity="0.72"/>
<rect x="1105" y="341" width="10" height="1.5" fill="#001080" fill-opacity="0.72"/>
<rect x="1116" y="341" width="1" height="1.5" fill="#000000" fill-opacity="0.35"/>
<rect x="1118" y="341" width="2" height="1.5" fill="#8a2be2" fill-opacity="0.72"/>
<rect x="1120" y="341" width="9" height="1.5" fill="#000000" fill-opacity="0.35"/>
<rect x="1129" y="341" width="11" height="1.5" fill="#001080" fill-opacity="0.72"/>
<rect x="1140" y="341" width="2" height="1.5" fill="#000000" fill-opacity="0.35"/>
<rect x="1101" y="343" width="3" height="1.5" fill="#0000ff" fill-opacity="0.72"/>
<rect x="1105" y="343" width="11" height="1.5" fill="#001080" fill-opacity="0.72"/>
<rect x="1117" y="343" width="1" height="1.5" fill="#000000" fill-opacity="0.35"/>
<rect x="1119" y="343" width="10" height="1.5" fill="#001080" fill-opacity="0.72"/>
<rect x="1129" y="343" width="7" height="1.5" fill="#000000" fill-opacity="0.35"/>
<rect x="1137" y="343" width="1" height="1.5" fill="#000000" fill-opacity="0.35"/>
<rect x="1139" y="343" width="16" height="1.5" fill="#001080" fill-opacity="0.72"/>
<rect x="1155" y="343" width="1" height="1.5" fill="#000000" fill-opacity="0.35"/>
<rect x="1101" y="345" width="2" height="1.5" fill="#0000ff" fill-opacity="0.72"/>
<rect x="1104" y="345" width="1" height="1.5" fill="#0431fa" fill-opacity="0.72"/>
<rect x="1105" y="345" width="11" height="1.5" fill="#001080" fill-opacity="0.72"/>
<rect x="1117" y="345" width="1" height="1.5" fill="#000000" fill-opacity="0.35"/>
<rect x="1119" y="345" width="1" height="1.5" fill="#098658" fill-opacity="0.72"/>
<rect x="1120" y="345" width="1" height="1.5" fill="#0431fa" fill-opacity="0.72"/>
<rect x="1122" y="345" width="1" height="1.5" fill="#0431fa" fill-opacity="0.72"/>
<rect x="1105" y="347" width="3" height="1.5" fill="#0000ff" fill-opacity="0.72"/>
<rect x="1109" y="347" width="1" height="1.5" fill="#319331" fill-opacity="0.72"/>
<rect x="1110" y="347" width="3" height="1.5" fill="#0000ff" fill-opacity="0.72"/>
<rect x="1114" y="347" width="1" height="1.5" fill="#000000" fill-opacity="0.35"/>
<rect x="1116" y="347" width="1" height="1.5" fill="#000000" fill-opacity="0.35"/>
<rect x="1118" y="347" width="1" height="1.5" fill="#098658" fill-opacity="0.72"/>
<rect x="1119" y="347" width="1" height="1.5" fill="#000000" fill-opacity="0.35"/>
<rect x="1121" y="347" width="1" height="1.5" fill="#000000" fill-opacity="0.35"/>
<rect x="1123" y="347" width="1" height="1.5" fill="#000000" fill-opacity="0.35"/>
<rect x="1125" y="347" width="11" height="1.5" fill="#001080" fill-opacity="0.72"/>
<rect x="1136" y="347" width="1" height="1.5" fill="#319331" fill-opacity="0.72"/>
<rect x="1138" y="347" width="4" height="1.5" fill="#319331" fill-opacity="0.72"/>
<rect x="1143" y="347" width="1" height="1.5" fill="#319331" fill-opacity="0.72"/>
<rect x="1109" y="349" width="3" height="1.5" fill="#0000ff" fill-opacity="0.72"/>
<rect x="1113" y="349" width="5" height="1.5" fill="#001080" fill-opacity="0.72"/>
<rect x="1119" y="349" width="1" height="1.5" fill="#000000" fill-opacity="0.35"/>
<rect x="1121" y="349" width="2" height="1.5" fill="#8a2be2" fill-opacity="0.72"/>
<rect x="1123" y="349" width="10" height="1.5" fill="#000000" fill-opacity="0.35"/>
<rect x="1133" y="349" width="10" height="1.5" fill="#001080" fill-opacity="0.72"/>
<rect x="1143" y="349" width="5" height="1.5" fill="#000000" fill-opacity="0.35"/>
<rect x="1109" y="351" width="2" height="1.5" fill="#8a2be2" fill-opacity="0.72"/>
<rect x="1111" y="351" width="8" height="1.5" fill="#000000" fill-opacity="0.35"/>
<rect x="1119" y="351" width="11" height="1.5" fill="#001080" fill-opacity="0.72"/>
<rect x="1131" y="351" width="1" height="1.5" fill="#000000" fill-opacity="0.35"/>
<rect x="1133" y="351" width="3" height="1.5" fill="#000000" fill-opacity="0.35"/>
<rect x="1137" y="351" width="1" height="1.5" fill="#000000" fill-opacity="0.35"/>
<rect x="1139" y="351" width="5" height="1.5" fill="#001080" fill-opacity="0.72"/>
<rect x="1144" y="351" width="2" height="1.5" fill="#000000" fill-opacity="0.35"/>
<rect x="1105" y="353" width="1" height="1.5" fill="#319331" fill-opacity="0.72"/>
<rect x="1101" y="355" width="1" height="1.5" fill="#0431fa" fill-opacity="0.72"/>
<rect x="1097" y="357" width="1" height="1.5" fill="#7b3814" fill-opacity="0.72"/>
<rect x="1097" y="361" width="2" height="1.5" fill="#008000" fill-opacity="0.72"/>
<rect x="1100" y="361" width="4" height="1.5" fill="#008000" fill-opacity="0.72"/>
<rect x="1105" y="361" width="5" height="1.5" fill="#008000" fill-opacity="0.72"/>
<rect x="1097" y="363" width="2" height="1.5" fill="#8a2be2" fill-opacity="0.72"/>
<rect x="1099" y="363" width="10" height="1.5" fill="#000000" fill-opacity="0.35"/>
<rect x="1109" y="363" width="9" height="1.5" fill="#001080" fill-opacity="0.72"/>
<rect x="1118" y="363" width="10" height="1.5" fill="#000000" fill-opacity="0.35"/>
<rect x="1097" y="367" width="5" height="1.5" fill="#001080" fill-opacity="0.72"/>
<rect x="1103" y="367" width="1" height="1.5" fill="#000000" fill-opacity="0.35"/>
<rect x="1105" y="367" width="1" height="1.5" fill="#098658" fill-opacity="0.72"/>
<rect x="1106" y="367" width="1" height="1.5" fill="#000000" fill-opacity="0.35"/>
<rect x="1093" y="371" width="1" height="1.5" fill="#319331" fill-opacity="0.72"/>
<rect x="1095" y="371" width="4" height="1.5" fill="#0000ff" fill-opacity="0.72"/>
<rect x="1100" y="371" width="1" height="1.5" fill="#319331" fill-opacity="0.72"/>
<rect x="1097" y="373" width="2" height="1.5" fill="#008000" fill-opacity="0.72"/>
<rect x="1100" y="373" width="4" height="1.5" fill="#008000" fill-opacity="0.72"/>
<rect x="1105" y="373" width="5" height="1.5" fill="#008000" fill-opacity="0.72"/>
<rect x="1111" y="373" width="9" height="1.5" fill="#008000" fill-opacity="0.72"/>
<rect x="1121" y="373" width="2" height="1.5" fill="#008000" fill-opacity="0.72"/>
<rect x="1124" y="373" width="7" height="1.5" fill="#008000" fill-opacity="0.72"/>
<rect x="1097" y="375" width="9" height="1.5" fill="#001080" fill-opacity="0.72"/>
<rect x="1106" y="375" width="9" height="1.5" fill="#000000" fill-opacity="0.35"/>
<rect x="1115" y="375" width="7" height="1.5" fill="#a31515" fill-opacity="0.72"/>
<rect x="1123" y="375" width="7" height="1.5" fill="#a31515" fill-opacity="0.72"/>
<rect x="1131" y="375" width="2" height="1.5" fill="#a31515" fill-opacity="0.72"/>
<rect x="1134" y="375" width="5" height="1.5" fill="#a31515" fill-opacity="0.72"/>
<rect x="1140" y="375" width="1" height="1.5" fill="#a31515" fill-opacity="0.72"/>
<rect x="1142" y="375" width="1" height="1.5" fill="#000000" fill-opacity="0.35"/>
<rect x="1144" y="375" width="5" height="1.5" fill="#001080" fill-opacity="0.72"/>
<rect x="1149" y="375" width="2" height="1.5" fill="#000000" fill-opacity="0.35"/>
<rect x="1097" y="377" width="4" height="1.5" fill="#001080" fill-opacity="0.72"/>
<rect x="1101" y="377" width="3" height="1.5" fill="#000000" fill-opacity="0.35"/>
<rect x="1093" y="379" width="1" height="1.5" fill="#319331" fill-opacity="0.72"/>
<rect x="1089" y="381" width="1" height="1.5" fill="#0431fa" fill-opacity="0.72"/>
<rect x="1097" y="239.5" width="18" height="2" fill="#e51400"/>
<rect x="1093" y="259" width="7" height="2" fill="#c01010"/>
</svg>
</body></html>
